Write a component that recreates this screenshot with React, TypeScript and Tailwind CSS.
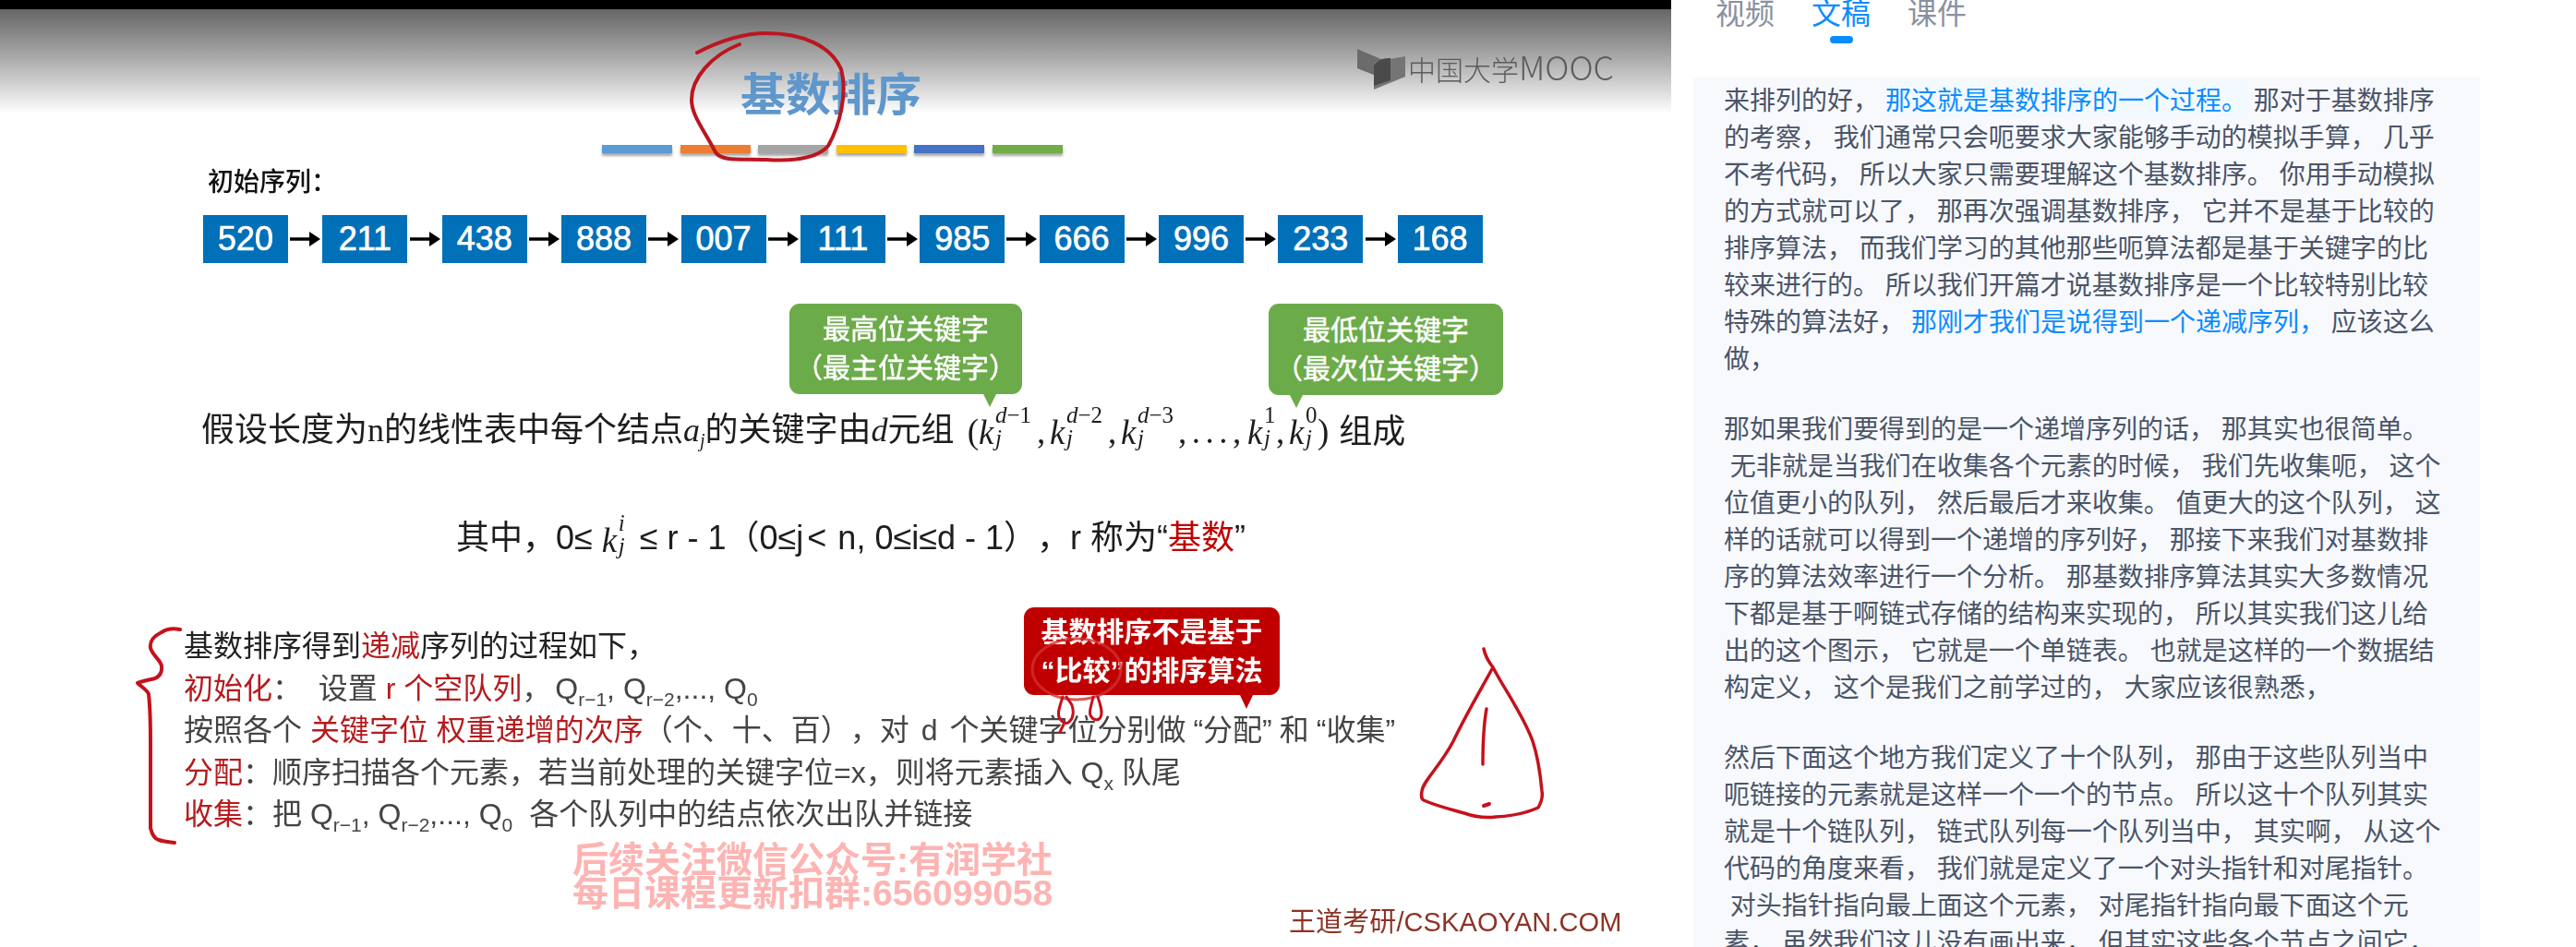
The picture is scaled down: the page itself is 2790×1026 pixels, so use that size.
const values = ["520", "211", "438", "888", "007", "111", "985", "666", "996", "233", "168"];

const stripes = ["bg-[#5b9bd5]", "bg-[#ed7d31]", "bg-[#a5a5a5]", "bg-[#ffc000]", "bg-[#4472c4]", "bg-[#70ad47]"];

type Line = { text: string; blue?: string; tail?: string; mark?: boolean };

const transcript: (Line | null)[] = [
  { text: "来排列的好， ", blue: "那这就是基数排序的一个过程。", tail: " 那对于基数排序", mark: true },
  { text: "的考察， 我们通常只会呃要求大家能够手动的模拟手算， 几乎" },
  { text: "不考代码， 所以大家只需要理解这个基数排序。 你用手动模拟" },
  { text: "的方式就可以了， 那再次强调基数排序， 它并不是基于比较的" },
  { text: "排序算法， 而我们学习的其他那些呃算法都是基于关键字的比" },
  { text: "较来进行的。 所以我们开篇才说基数排序是一个比较特别比较" },
  { text: "特殊的算法好， ", blue: "那刚才我们是说得到一个递减序列，", tail: " 应该这么" },
  { text: "做，" },
  null,
  { text: "那如果我们要得到的是一个递增序列的话， 那其实也很简单。" },
  { text: " 无非就是当我们在收集各个元素的时候， 我们先收集呃， 这个" },
  { text: "位值更小的队列， 然后最后才来收集。 值更大的这个队列， 这" },
  { text: "样的话就可以得到一个递增的序列好， 那接下来我们对基数排" },
  { text: "序的算法效率进行一个分析。 那基数排序算法其实大多数情况" },
  { text: "下都是基于啊链式存储的结构来实现的， 所以其实我们这儿给" },
  { text: "出的这个图示， 它就是一个单链表。 也就是这样的一个数据结" },
  { text: "构定义， 这个是我们之前学过的， 大家应该很熟悉，" },
  null,
  { text: "然后下面这个地方我们定义了十个队列， 那由于这些队列当中" },
  { text: "呃链接的元素就是这样一个一个的节点。 所以这十个队列其实" },
  { text: "就是十个链队列， 链式队列每一个队列当中， 其实啊， 从这个" },
  { text: "代码的角度来看， 我们就是定义了一个对头指针和对尾指针。" },
  { text: " 对头指针指向最上面这个元素， 对尾指针指向最下面这个元" },
  { text: "素， 虽然我们这儿没有画出来， 但其实这些各个节点之间它，" },
];

const Arrow = () => (
  <svg width="33" height="18" viewBox="0 0 33 18" className="shrink-0">
    <path d="M0 9H22" stroke="#000" strokeWidth="3.5" />
    <path d="M21 1L33 9L21 17Z" fill="#000" />
  </svg>
);

// k with a superscript and the j subscript stacked next to it
const K = ({ sup, width }: { sup: React.ReactNode; width: string }) => (
  <span className="inline-flex items-center align-middle font-['Liberation_Serif']">
    <i className="w-[16px] text-[37px] leading-none">k</i>
    <span className={`inline-flex flex-col pl-[2px] text-[25px] leading-[25px] ${width}`}>
      <span className="-mt-[12px]">{sup}</span>
      <i className="text-[25px]">j</i>
    </span>
  </span>
);

const Comma = () => <span className="w-[14px]">,</span>;

const Q = ({ sub }: { sub: string }) => (
  <span>
    Q<span className="relative top-[8px] text-[21px] leading-none">{sub}</span>
  </span>
);

const Red = ({ children }: { children: React.ReactNode }) => <span className="text-[#b51c1f]">{children}</span>;

const Callout = ({ a, b, className, tip }: { a: string; b: string; className: string; tip: string }) => (
  <div className={`relative flex flex-col items-center justify-center rounded-[11px] bg-[#6cab49] text-[30px] leading-[42px] text-white [-webkit-text-stroke:0.5px_white] ${className}`}>
    <span>{a}</span>
    <span>{b}</span>
    <span className={`absolute top-full h-[14px] w-[14px] bg-[#6cab49] [clip-path:polygon(0_0,100%_0,50%_100%)] ${tip}`} />
  </div>
);

const Slide = () => (
  <div className="relative h-[1026px] w-[1810px] shrink-0 overflow-hidden bg-white font-['Liberation_Sans','Noto_Sans_CJK_SC',sans-serif] text-[#222] [text-spacing-trim:space-all]">
    <div className="absolute inset-x-0 top-[10px] h-[113px] bg-gradient-to-b from-[#666666] to-white" />
    <div className="relative h-[10px] bg-black" />

    <div className="relative blur-[0.6px]">
      <h1 className="mt-[63px] h-[60px] pr-[10px] text-center text-[49px] font-bold leading-[60px] text-[#5f97cb]">基数排序</h1>

      <div className="mt-[24px] flex h-[9px] justify-start gap-[8.5px] pl-[652px]">
        {stripes.map((c) => (
          <div key={c} className={`h-[9px] w-[76px] shadow-[0_3px_3px_rgba(0,0,0,0.35)] ${c}`} />
        ))}
      </div>

      <div className="mt-[12px] h-[40px] pl-[225px] text-[28px] font-medium leading-[40px] text-[#111]">初始序列：</div>

      <div className="mt-[15px] flex items-center pl-[220px]">
        {values.map((v, i) => (
          <div key={v} className="flex items-center">
            {i > 0 && (
              <div className="mx-[2.2px]">
                <Arrow />
              </div>
            )}
            <div className="flex h-[52px] w-[92px] items-center justify-center bg-[#0070b8] text-[36px] text-white [-webkit-text-stroke:0.7px_white]">{v}</div>
          </div>
        ))}
      </div>

      <div className="mt-[44px] flex h-[115px] items-start pl-[855px]">
        <Callout className="h-[98px] w-[252px]" a="最高位关键字" b="（最主位关键字）" tip="left-[210px]" />
        <Callout className="ml-[267px] h-[99px] w-[254px]" a="最低位关键字" b="（最次位关键字）" tip="left-[23px]" />
      </div>

      <div className="flex h-[48px] items-center whitespace-pre pl-[218px] text-[36px] leading-[48px] text-[#1d1d1d]">
        <span>
          假设长度为<span className="font-['Liberation_Serif']">n</span>的线性表中每个结点<i className="font-['Liberation_Serif']">a</i>
          <i className="relative top-[6px] font-['Liberation_Serif'] text-[20px]">j</i>的关键字由<i className="font-['Liberation_Serif']">d</i>元组
        </span>
        <span className="ml-[14px] flex items-center font-['Liberation_Serif'] text-[37px]">
          (<K sup={<><i>d</i>−1</>} width="w-[47px]" /><Comma />
          <K sup={<><i>d</i>−2</>} width="w-[47px]" /><Comma />
          <K sup={<><i>d</i>−3</>} width="w-[46px]" />
          <span className="w-[75px] tracking-[5.5px]">,...,</span>
          <K sup="1" width="w-[15px]" /><Comma />
          <K sup="0" width="w-[15px]" />)
        </span>
        <span className="ml-[11px]">组成</span>
      </div>

      <div className="mt-[67px] flex h-[48px] items-center whitespace-pre pl-[494px] text-[36px] leading-[48px] text-[#1d1d1d]">
        其中，0≤
        <span className="ml-[10px]">
          <K sup={<i>i</i>} width="w-[25px]" />
        </span>
        ≤ r - 1（0≤j<span className="ml-[4px] mr-[12px]">&lt;</span>n, 0≤i≤d - 1），r 称为“<span className="text-[#c00000]">基数</span>”
      </div>

      <div className="mt-[71px] whitespace-pre pl-[199px] text-[32px] leading-[45.5px] text-[#444]">
        <div className="text-[#222]">基数排序得到<Red>递减</Red>序列的过程如下，</div>
        <div>
          <Red>初始化</Red>：  设置 <Red>r 个空队列</Red>，<span className="ml-[4px]"><Q sub="r−1" /></span>, <Q sub="r−2" />,..., <Q sub="0" />
        </div>
        <div>
          按照各个 <Red>关键字位 权重递增的次序</Red>（个、十、百），对<span className="mx-[4px]"> d </span>个关键字位分别做<span className="ml-[8px]">“</span>分配<span className="mr-[8px]">”</span>和<span className="ml-[8px]">“</span>收集<span className="mr-[4px]">”</span>
        </div>
        <div>
          <Red>分配</Red>：顺序扫描各个元素，若当前处理的关键字位=x，则将元素插入 <Q sub="x" /> 队尾
        </div>
        <div>
          <Red>收集</Red>：把 <Q sub="r−1" />, <Q sub="r−2" />,..., <Q sub="0" /><span className="ml-[18px]">各个队列中的结点依次出队并链接</span>
        </div>
      </div>

      <div className="mt-[8px] pl-[620px] text-[39px] font-bold leading-[36px] text-[#fdb4b2]">
        <div>后续关注微信公众号:有润学社</div>
        <div>每日课程更新扣群:656099058</div>
      </div>

      <div className="-mt-[2px] pl-[1396px] text-[29px] leading-[30px] tracking-[0.1px] text-[#8b3426]">王道考研/CSKAOYAN.COM</div>
    </div>

    {/* logo sits on the gradient */}
    <div className="absolute left-[1470px] top-[53px] flex items-center gap-[3px] blur-[0.5px]">
      <svg width="52" height="44" viewBox="0 0 52 44">
        <path d="M0 0L28 12V32L0 21Z" fill="#6b6b6b" />
        <path d="M18 14L52 8V30L18 44Z" fill="#757575" />
        <path d="M18 18C24 10 30 10 36 10V34L18 40Z" fill="#4a4a4a" />
      </svg>
      <span className="-mt-[6px] font-['Noto_Sans_CJK_SC'] text-[30px] font-light leading-[40px] text-[#5c5c5c]">
        中国大学<span className="text-[36px]">MOOC</span>
      </span>
    </div>

    {/* red bubble over the list */}
    <div className="absolute left-[1109px] top-[658px] flex h-[95px] w-[277px] flex-col items-center justify-center rounded-[11px] bg-[#c00000] text-[30px] font-bold leading-[42px] text-white blur-[0.5px]">
      <span>基数排序不是基于</span>
      <span>“比较”的排序算法</span>
      <span className="absolute left-[234px] top-full h-[15px] w-[14px] bg-[#c00000] [clip-path:polygon(0_0,100%_0,50%_100%)]" />
    </div>

    {/* handwritten pen marks */}
    <svg width="1810" height="1026" viewBox="0 0 1810 1026" fill="none" strokeLinecap="round" strokeLinejoin="round" className="pointer-events-none absolute left-0 top-0">
      <path d="M755 57C780 44 805 36 830 36C870 36 900 50 911 75C918 100 910 135 897 158C885 172 860 175 830 173C800 172 782 175 775 165C762 140 749 125 749 108C749 85 770 60 801 48" stroke="#bb1620" strokeWidth="4" />
      <path d="M195 682C185 680 178 683 175 685C165 690 162 695 163 702C165 710 175 716 175 722C176 730 172 733 168 735C160 737 152 738 149 740C153 744 160 748 161 752C163 770 163 790 163 803V897C165 906 168 909 172 910C178 912 184 912 189 913" stroke="#c4121c" strokeWidth="4" />
      <path d="M1607 703C1609 712 1613 718 1617 723C1605 745 1590 770 1574 803C1560 830 1542 845 1540 857C1539 862 1540 866 1542 867C1555 873 1572 877 1586 881C1600 886 1612 886 1620 885C1640 884 1655 880 1666 875C1670 868 1671 862 1670 857C1668 835 1665 818 1660 803C1650 775 1630 748 1617 723" stroke="#c4121c" strokeWidth="3.5" />
      <path d="M1610 768C1607 785 1606 808 1606 828" stroke="#c4121c" strokeWidth="3.5" />
      <path d="M1607 873L1613 871" stroke="#c4121c" strokeWidth="4" />
      <ellipse cx="1166" cy="725" rx="48" ry="33" stroke="#d03030" strokeWidth="3" opacity="0.8" />
      <path d="M1151 755C1148 765 1145 772 1147 777C1150 783 1155 785 1158 782C1163 778 1163 770 1161 764C1159 760 1156 757 1155 755" stroke="#c4121c" strokeWidth="3" />
      <path d="M1184 755C1182 765 1179 770 1181 775C1184 781 1190 781 1192 777C1195 771 1191 762 1189 755" stroke="#c4121c" strokeWidth="3" />
      <path d="M1152 785L1148 793" stroke="#c4121c" strokeWidth="3" />
    </svg>
  </div>
);

const SidePanel = () => (
  <div className="h-[1026px] flex-1 overflow-hidden bg-white font-['Noto_Sans_CJK_SC',sans-serif]">
    <div className="-mt-[10px] flex gap-[40px] pl-[48px] text-[32px] leading-[44px] text-[#8a919f]">
      <span>视频</span>
      <span className="relative text-[#0a8cff]">
        文稿
        <span className="absolute left-[20px] top-[49px] h-[8px] w-[25px] rounded-full bg-[#0a8cff]" />
      </span>
      <span>课件</span>
    </div>

    <div className="mt-[50px] ml-[24px] w-[852px] bg-[#f8f9fd] px-[33px] pt-[3px] text-[28px] leading-[40px] text-[#4a5568] [word-spacing:0.6px]">
      {transcript.map((l, i) =>
        l === null ? (
          <div key={i} className="h-[36px]" />
        ) : (
          <div key={i} className="h-[40px] whitespace-pre">
            {l.text}
            {l.blue && <span className={`text-[#0a8cff] ${l.mark ? "bg-[#f3faff]" : ""}`}>{l.blue}</span>}
            {l.tail}
          </div>
        ),
      )}
    </div>
  </div>
);

export default function App() {
  return (
    <div className="flex h-[1026px] w-[2790px] overflow-hidden bg-white">
      <Slide />
      <SidePanel />
    </div>
  );
}
